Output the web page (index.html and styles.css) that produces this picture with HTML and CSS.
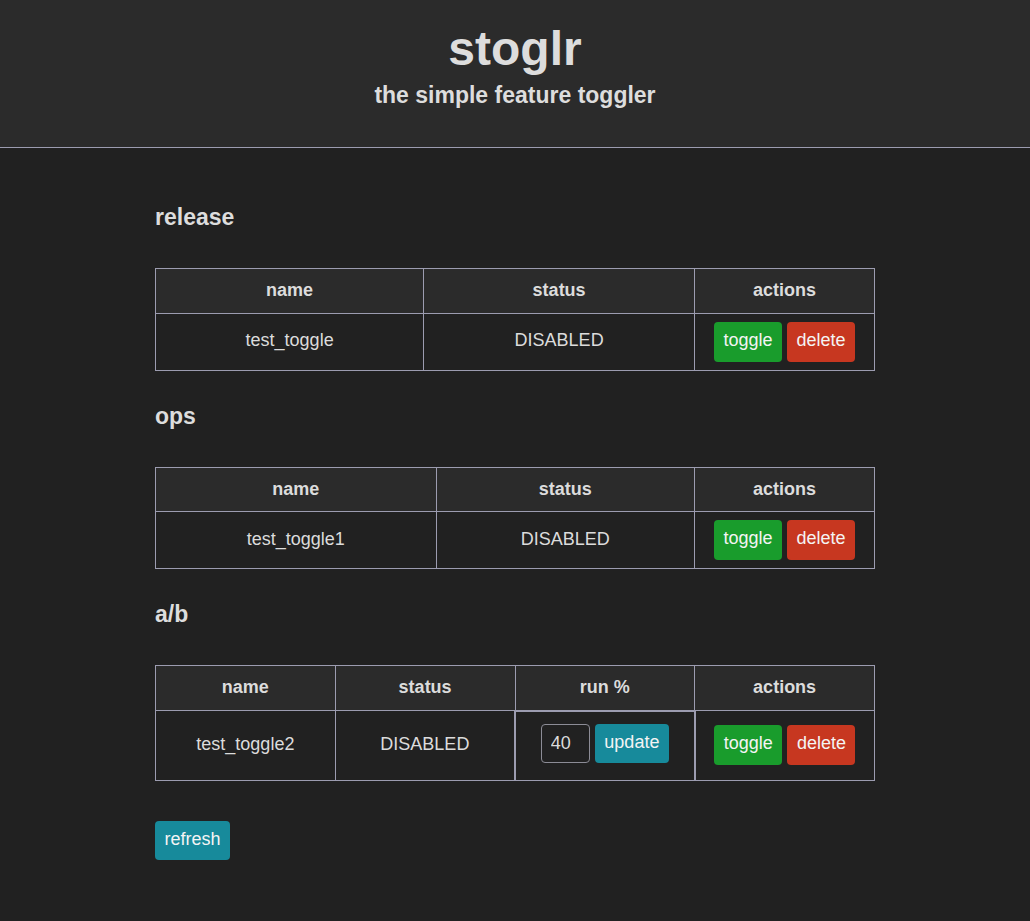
FILE: index.html
```html
<!DOCTYPE html>
<html lang="en">
<head>
<meta charset="utf-8">
<title>stoglr</title>
<link rel="stylesheet" href="styles.css">
</head>
<body>
<header class="site-header">
  <h1 class="title">stoglr</h1>
  <p class="subtitle">the simple feature toggler</p>
</header>
<main class="content">
  <section class="group">
    <h2 class="group-title">release</h2>
    <table class="toggles">
      <thead>
        <tr><th>name</th><th>status</th><th class="col-actions">actions</th></tr>
      </thead>
      <tbody>
        <tr>
          <td class="cell">test_toggle</td>
          <td class="cell">DISABLED</td>
          <td class="actions"><button class="btn btn-green">toggle</button><button class="btn btn-red">delete</button></td>
        </tr>
      </tbody>
    </table>
  </section>
  <section class="group">
    <h2 class="group-title">ops</h2>
    <table class="toggles">
      <thead>
        <tr><th>name</th><th>status</th><th class="col-actions">actions</th></tr>
      </thead>
      <tbody>
        <tr>
          <td class="cell">test_toggle1</td>
          <td class="cell">DISABLED</td>
          <td class="actions"><button class="btn btn-green">toggle</button><button class="btn btn-red">delete</button></td>
        </tr>
      </tbody>
    </table>
  </section>
  <section class="group">
    <h2 class="group-title">a/b</h2>
    <table class="toggles toggles-ab">
      <thead>
        <tr><th>name</th><th>status</th><th>run %</th><th class="col-actions">actions</th></tr>
      </thead>
      <tbody>
        <tr>
          <td class="cell">test_toggle2</td>
          <td class="cell">DISABLED</td>
          <td class="run"><div class="run-form"><input class="pct" type="text" value="40"><button class="btn btn-teal">update</button></div></td>
          <td class="actions"><button class="btn btn-green">toggle</button><button class="btn btn-red">delete</button></td>
        </tr>
      </tbody>
    </table>
  </section>
  <div class="footer-actions">
    <button class="btn btn-teal">refresh</button>
  </div>
</main>
</body>
</html>
```
FILE: styles.css
```css
* { box-sizing: border-box; }

html, body {
  margin: 0;
  padding: 0;
}

body {
  background: #212121;
  color: #dcdcdc;
  font-family: "Liberation Sans", Arial, sans-serif;
  font-size: 18px;
  min-height: 921px;
}

.site-header {
  background: #2b2b2b;
  border-bottom: 1px solid #9c9cb0;
  text-align: center;
  padding: 21px 0 39px;
  height: 148px;
}

.title {
  margin: 0;
  font-size: 48px;
  line-height: 55px;
  font-weight: bold;
  color: #dddddd;
}

.subtitle {
  margin: 6px 0 0;
  font-size: 23px;
  line-height: 26px;
  font-weight: bold;
  color: #dddddd;
}

.content {
  width: 720px;
  margin: 0 auto;
  padding-top: 24px;
  padding-bottom: 60px;
}

.group-title {
  margin: 32px 0 38px;
  font-size: 23px;
  line-height: 26px;
  font-weight: bold;
  color: #dddddd;
}

.toggles {
  width: 100%;
  border-collapse: collapse;
  border: 1px solid #9c9cb0;
}

.toggles th,
.toggles td {
  border: 1px solid #9c9cb0;
  text-align: center;
  vertical-align: middle;
}

.toggles th {
  background: #2b2b2b;
  font-weight: bold;
  padding: 11px 8px 12.5px;
  line-height: 20px;
}

.toggles td {
  padding: 8px;
  line-height: 21px;
}

.toggles td.cell {
  padding-bottom: 10px;
}

.col-actions { width: 180px; }

.toggles-ab th { width: 25%; }

.actions {
  white-space: nowrap;
}

.actions .btn + .btn { margin-left: 5px; }

.btn {
  font-family: "Liberation Sans", Arial, sans-serif;
  font-size: 18px;
  line-height: 22px;
  color: #f4f4f4;
  border: none;
  border-radius: 4px;
  padding: 7px 9.5px 11px;
  height: 40px;
  cursor: pointer;
  vertical-align: middle;
}

.btn-green { background: #199c2c; }
.btn-red { background: #c73720; }
.btn-teal { background: #178a9b; }

.toggles td.run {
  border-top: 2px solid #9c9cb0;
  border-left: 2px solid #9c9cb0;
  border-right: 2px solid #9c9cb0;
  padding: 12px 8px 17px;
}

.run-form {
  display: flex;
  justify-content: center;
  align-items: center;
  gap: 5px;
}

.pct {
  width: 49px;
  height: 39px;
  background: #212121;
  color: #dcdcdc;
  border: 1px solid #8c8c96;
  border-radius: 4px;
  font-family: "Liberation Sans", Arial, sans-serif;
  font-size: 18px;
  padding: 0 9px;
}

.btn-teal {
  height: 39px;
  padding-top: 7.5px;
  padding-bottom: 9.5px;
}

.footer-actions {
  margin-top: 40px;
}
```
